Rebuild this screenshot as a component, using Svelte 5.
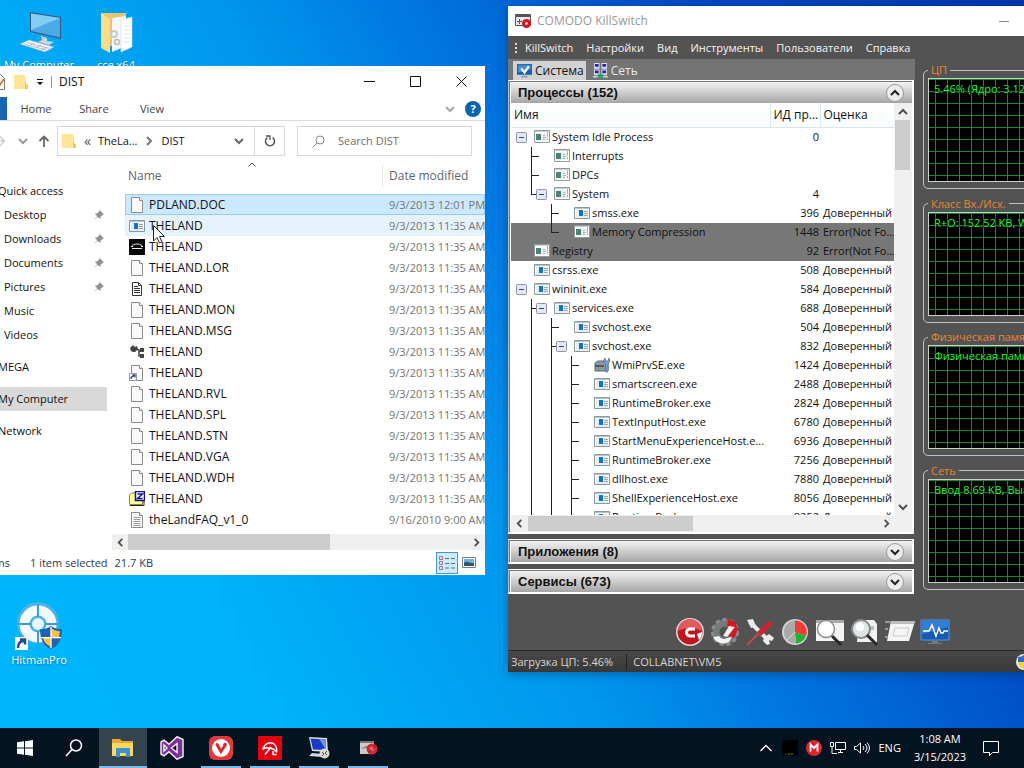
<script>
  const quickItems = ['Desktop', 'Downloads', 'Documents', 'Pictures'];
  const t = '9/3/2013 11:35 AM';
  const files = [
    ['PDLAND.DOC', 'doc', '9/3/2013 12:01 PM'],
    ['THELAND', 'app', t],
    ['THELAND', 'dos', t],
    ['THELAND.LOR', 'doc', t],
    ['THELAND', 'note', t],
    ['THELAND.MON', 'doc', t],
    ['THELAND.MSG', 'doc', t],
    ['THELAND', 'reg', t],
    ['THELAND', 'link', t],
    ['THELAND.RVL', 'doc', t],
    ['THELAND.SPL', 'doc', t],
    ['THELAND.STN', 'doc', t],
    ['THELAND.VGA', 'doc', t],
    ['THELAND.WDH', 'doc', t],
    ['THELAND', 'zip', t],
    ['theLandFAQ_v1_0', 'text', '9/16/2010 9:00 AM']
  ];

  const ok = 'Доверенный';
  const err = 'Error(Not Fo...';
  // guides: levels with a continuing line; last: the branch ends at this row
  const processes = [
    { name: 'System Idle Process', level: 0, pid: 0, rate: '', icon: 'sys', open: true, guides: [] },
    { name: 'Interrupts', level: 1, pid: '', rate: '', icon: 'sys', guides: [1] },
    { name: 'DPCs', level: 1, pid: '', rate: '', icon: 'sys', guides: [1] },
    { name: 'System', level: 1, pid: 4, rate: '', icon: 'sys', open: true, guides: [], last: true },
    { name: 'smss.exe', level: 2, pid: 396, rate: ok, icon: 'app', guides: [2] },
    { name: 'Memory Compression', level: 2, pid: 1448, rate: err, icon: 'sys', guides: [], last: true, dim: true },
    { name: 'Registry', level: 0, pid: 92, rate: err, icon: 'sys', guides: [], dim: true },
    { name: 'csrss.exe', level: 0, pid: 508, rate: ok, icon: 'app', guides: [] },
    { name: 'wininit.exe', level: 0, pid: 584, rate: ok, icon: 'app', open: true, guides: [] },
    { name: 'services.exe', level: 1, pid: 688, rate: ok, icon: 'app', open: true, guides: [1] },
    { name: 'svchost.exe', level: 2, pid: 504, rate: ok, icon: 'app', guides: [1, 2] },
    { name: 'svchost.exe', level: 2, pid: 832, rate: ok, icon: 'app', open: true, guides: [1, 2] },
    ...[
      ['WmiPrvSE.exe', 1424, 'wmi'],
      ['smartscreen.exe', 2488],
      ['RuntimeBroker.exe', 2824],
      ['TextInputHost.exe', 6780],
      ['StartMenuExperienceHost.e...', 6936],
      ['RuntimeBroker.exe', 7256],
      ['dllhost.exe', 7880],
      ['ShellExperienceHost.exe', 8056],
      ['RuntimeBroker.exe', 8252]
    ].map(([name, pid, icon]) => ({ name, pid, level: 3, rate: ok, icon: icon ?? 'app', guides: [1, 2, 3] }))
  ];

  const menu = ['KillSwitch', 'Настройки', 'Вид', 'Инструменты', 'Пользователи', 'Справка'];
  const charts = [
    ['ЦП', '5.46% (Ядро: 3.12%)'],
    ['Класс Вх./Исх.', 'R+O: 152.52 KB, W: 0'],
    ['Физическая память', 'Физическая память: 1.9 GB'],
    ['Сеть', 'Ввод 8.69 KB, Вывод 0']
  ];
  const tools = ['comodo', 'gear', 'tools', 'pie', 'find', 'inspect', 'run', 'monitor'];
  const tasks = [
    ['start', 'Start'], ['search', 'Search'], ['explorer', 'File Explorer', 'active'], ['vs', 'Visual Studio'],
    ['vivaldi', 'Vivaldi', 'running'], ['avira', 'Avira', 'running'], ['remote', 'Remote Desktop', 'running'], ['kill', 'KillSwitch', 'running']
  ];
  let search = $state('');
</script>

{#snippet fileIcon(kind)}
  <svg class="i16" viewBox="0 0 16 16" aria-hidden="true">
    {#if kind === 'doc' || kind === 'text' || kind === 'link'}
      <path d="M2.5.5h8l3 3v12h-11z" fill="#fafafa" stroke="#8b8b8b" />
      <path d="M10.500.5v3h3" fill="#fff" stroke="#8b8b8b" />
      {#if kind === 'text'}<path d="M4.500 5.500h7M4.500 7.500h7M4.500 9.500h7M4.500 11.500h7M4.500 13.500h7" stroke="#9a9a9a" />{/if}
      {#if kind === 'link'}<path d="M.5 8.500h7v7h-7z" fill="#fff" stroke="#999" /><path d="M2 14c0-2 1-3 3-3M3.500 10h2.500v2.500" fill="none" stroke="#2c4a8c" stroke-width="1.300" />{/if}
    {:else if kind === 'app'}
      <path d="M.5 2.500h15v11H.5z" fill="#fff" stroke="#8a979f" /><path d="M1 3h14v1H1z" fill="#b9c4cb" />
      <path d="M2 5h12v8H2z" fill="#e4eef5" /><path d="M5 5h4v6H5z" fill="#1673b8" />
      <path d="M10 6.500h4M10 8.500h4M10 10.500h4" stroke="#9aa8b2" />
    {:else if kind === 'sys'}
      <path d="M.5 1.500h15v12H.5z" fill="#fff" stroke="#8f9b9f" /><path d="M1 2h14v1H1z" fill="#c9d0d2" />
      <path d="M2 4h12v8H2z" fill="#eef3f1" /><path d="M2 5h5v6H2z" fill="#4f8274" />
      <path d="M9 6.500h2M9 8.500h3M9 10.500h2M13.500 3v5M13.500 9v2" stroke="#a3b3b2" />
    {:else if kind === 'dos'}
      <path d="M0 0h16v16H0z" fill="#050505" /><path d="M3 6.500c3-2 7-2 10 0M2 7.500h2M12 7.500h2M3 9.500h10" stroke="#eee" fill="none" />
    {:else if kind === 'note'}
      <path d="M3.500 1.500h6l3 3v10h-9z" fill="#fff" stroke="#333" /><path d="M5 5.500h4M5 7.500h6M5 9.500h6M5 11.500h6M9.500 1.500v3h3" stroke="#333" fill="none" />
    {:else if kind === 'reg'}
      <path d="M1 4l3-3 2 2 2-1 1 3-3 3-2 0-2-1z" fill="#444" /><path d="M7 5l3 1v6h3M10 7h3" stroke="#444" stroke-width="1.500" fill="none" />
      <path d="M11 4h4v4h-4zM11 10h4v4h-4z" fill="#444" />
    {:else if kind === 'zip'}
      <path d="M.5 13.500V4l2-2H8v2h5.500v9.500z" fill="#ffff9c" stroke="#8b8b20" /><path d="M1 14.500h14V6" stroke="#222" fill="none" />
      <path d="M6.500.5h9v9h-9z" fill="#fff" stroke="#12128f" stroke-width="1.500" /><path d="M8.500 3h5l-5 4.500h5" stroke="#12128f" stroke-width="1.500" fill="none" />
    {:else if kind === 'wmi'}
      <path d="M1 6l3-2h7l3 2v8H1z" fill="#8c979e" stroke="#5c686f" /><path d="M1 9h9" stroke="#40484d" stroke-width="1.500" />
      <path d="M11 1l1 3 2 0 1-3 1 3-2 3v7c0 1.500-2.500 1.500-2.500 0V7L9.500 4z" fill="#7ba0d4" stroke="#4b679b" stroke-width=".7" />
    {/if}
  </svg>
{/snippet}

{#snippet folder()}
  <svg class="i16" viewBox="0 0 16 16" aria-hidden="true"><path d="M12 1l1 9 2 1v4H2z" fill="#efc95f" /><path d="M1 1h11v14H1z" fill="#ffe594" /></svg>
{/snippet}

{#snippet chev(dir)}
  <svg class="chev {dir}" viewBox="0 0 10 10" aria-hidden="true"><path d="M1 3l4 4 4-4" fill="none" stroke="currentColor" stroke-width="2" /></svg>
{/snippet}

{#snippet shield()}
  <path d="M0 3C4 3 7 2 10 0c3 2 6 3 10 3 0 9-3 15-10 18C3 18 0 12 0 3z" fill="#2062b0" />
  <path d="M10 2c3 2 5 2.500 8 2.800-.1 2-.3 3.700-.8 5.200H10zM10 10v9C6 17 3.500 14.500 2.600 10z" fill="#ffc23d" /><path d="M10 1v19M1 10.500h18" stroke="#fff" stroke-width="1.200" />
{/snippet}

<main class="desktop">
  <button class="shortcut computer">
    <svg viewBox="0 0 48 48" aria-hidden="true">
      <path d="M28 3l31 5v22l-31-7z" transform="translate(-1 0)" fill="#385c80" /><path d="M28 4.500l29 4.600v19.400L28 22z" fill="#4caae8" /><path d="M28 4.500l29 4.600L28 21z" fill="#82cdf4" />
      <path d="M38 27l6 2v3l7 1-5 3-11-3 4-2z" fill="#c9d6e0" /><path d="M17 35l9-4 25 7-9 5z" fill="#f2f5f8" stroke="#9eacb8" stroke-width=".6" />
      <path d="M21 35l22 6M24 33.500l22 6M26 37l5-3M32 39l6-3M38 41l6-3" stroke="#b2bfca" />
    </svg>
    <span>My Computer</span>
  </button>
  <button class="shortcut archive">
    <svg viewBox="0 0 48 48" aria-hidden="true">
      <path d="M9 4h25v33H9z" fill="#e8c56c" /><path d="M20 9l14-2v30l-14 6z" fill="#f7f7f5" /><path d="M29 11l11-3v30l-11 5z" fill="#fff" stroke="#d8dde0" stroke-width=".6" />
      <path d="M9 4l9 6v34l-9-5z" fill="#fbdc88" /><circle cx="22" cy="25" r="3" fill="none" stroke="#c3ccd2" stroke-width="2" /><circle cx="25" cy="33" r="2.500" fill="none" stroke="#b3bec6" stroke-width="1.500" />
      <path d="M32 17h6M32 21h5M32 25h6M32 29h5M32 33h5" stroke="#dde1e4" />
    </svg>
    <span>cce x64</span>
  </button>
  <button class="shortcut hitman">
    <svg viewBox="0 0 48 48" aria-hidden="true">
      <circle cx="23" cy="21" r="21" fill="#5db4e6" opacity=".8" /><circle cx="23" cy="22" r="13.500" fill="none" stroke="#f2fafe" stroke-width="10" />
      <circle cx="23" cy="22" r="6" fill="#e8f6fd" /><path d="M23 2v13M23 29v13M3 22h13M30 22h13" stroke="#3c9bd0" stroke-width="2" />
      <path d="M0 35h13v13H0z" fill="#fff" /><path d="M3 46c0-5 2-7 6-7M5 37.500h5v5" stroke="#234b91" stroke-width="2.500" fill="none" />
      <g transform="translate(25 24) scale(1.1)">{@render shield()}</g>
    </svg>
    <span>HitmanPro</span>
  </button>

  <section class="explorer" aria-label="DIST">
    <header class="ex-title">
      <svg class="i16" viewBox="0 0 16 16" aria-hidden="true"><path d="M1.500.5h9l4 4v11h-13z" fill="#fff" stroke="#777" /><path d="M5 8l4 4 5-7" stroke="#c7773a" stroke-width="2" fill="none" /></svg>
      {@render folder()}
      <svg class="qa" viewBox="0 0 8 8" aria-hidden="true"><path d="M1 1.500h6" stroke="#111" /><path d="M1 4h6L4 7z" fill="#111" /></svg>
      <i class="bar"></i>
      <span>DIST</span>
      <div class="winbtns">
        <button aria-label="Minimize"><svg viewBox="0 0 11 11"><path d="M0 5.500h11" stroke="#111" /></svg></button>
        <button aria-label="Maximize"><svg viewBox="0 0 11 11"><path d="M.5.5h10v10H.5z" stroke="#111" fill="none" /></svg></button>
        <button aria-label="Close"><svg viewBox="0 0 11 11"><path d="M.5.5l10 10M10.500.5l-10 10" stroke="#111" /></svg></button>
      </div>
    </header>
    <nav class="ribbon">
      <i class="filetab"></i>
      <button>Home</button><button>Share</button><button>View</button>
      <span class="grow"></span>
      <span class="soft">{@render chev('down')}</span>
      <button class="help" aria-label="Help">?</button>
    </nav>
    <div class="address">
      <button class="fwd" aria-label="Forward"><svg viewBox="0 0 12 12"><path d="M0 6h10.500M6 1.500L10.500 6 6 10.500" fill="none" stroke="#ccc" stroke-width="1.500" /></svg></button>
      <span class="hist">{@render chev('down')}</span>
      <button class="up" aria-label="Up"><svg viewBox="0 0 12 12"><path d="M6 12V1.500M1.500 6L6 1.500 10.500 6" fill="none" stroke="#666" stroke-width="1.800" /></svg></button>
      <div class="path">
        {@render folder()}
        <span class="lt">«</span>
        <button>TheLa...</button>
        <span class="gt">{@render chev('right')}</span>
        <button>DIST</button>
        <span class="grow"></span>
        <button class="drop" aria-label="Previous locations">{@render chev('down')}</button>
        <button class="refresh" aria-label="Refresh"><svg viewBox="0 0 12 12"><path d="M3.500 2.500A4.500 4.500 0 1 0 8.500 2.500" fill="none" stroke="#555" stroke-width="1.500" /><path d="M2 1h4v4" fill="none" stroke="#555" stroke-width="1.300" /></svg></button>
      </div>
      <label class="search">
        <svg viewBox="0 0 13 13" aria-hidden="true"><circle cx="8" cy="5" r="4" fill="none" stroke="#888" /><path d="M5 8L.5 12.500" stroke="#888" /></svg>
        <input bind:value={search} placeholder="Search DIST" aria-label="Search DIST" />
      </label>
    </div>
    <div class="ex-body">
      <nav class="side">
        <a href="#quick">Quick access</a>
        {#each quickItems as q}
          <a class="sub" href="#{q}">{q}
            <svg viewBox="0 0 10 10" aria-hidden="true"><path d="M5.500 0L10 4.500 8.500 5 6.500 7 6.300 9.300 3.700 6.700 0 10 3.200 6.200.7 3.700 3 3.500 5 1.500z" fill="#8d9499" /></svg>
          </a>
        {/each}
        <a class="sub" href="#music">Music</a>
        <a class="sub" href="#videos">Videos</a>
        <a class="root" href="#mega">MEGA</a>
        <a class="root on" href="#computer">My Computer</a>
        <a class="root" href="#network">Network</a>
      </nav>
      <div class="files">
        <table>
          <colgroup><col class="c-name" /><col /></colgroup>
          <thead><tr><th>Name<span class="sort"><svg viewBox="0 0 8 5" aria-hidden="true"><path d="M.5 4.500L4 1l3.500 3.500" fill="none" stroke="#555" /></svg></span></th><th class="date">Date modified</th></tr></thead>
          <tbody>
            {#each files as [name, kind, date], i}
              <tr class:selected={i === 0} class:hover={i === 1}>
                <td><div class="fname">{@render fileIcon(kind)}<span>{name}</span></div></td>
                <td class="date">{date}</td>
              </tr>
            {/each}
          </tbody>
        </table>
        <div class="hscroll ex-hs"><button aria-label="Scroll left">{@render chev('left')}</button><i class="thumb ex-thumb"></i><span class="grow"></span><button aria-label="Scroll right">{@render chev('right')}</button></div>
      </div>
    </div>
    <footer class="ex-status">
      <span>16 items</span><span>1 item selected</span><span class="size">21.7 KB</span>
      <span class="grow"></span>
      <button class="view on" aria-label="Details view"><svg viewBox="0 0 16 14"><g fill="none" stroke="#a4709c"><path d="M.5.5h3v3h-3zM.5 5.500h3v3h-3zM.5 10.500h3v3h-3z" /></g><path d="M6 2.500h4M12 2.500h4M6 7.500h4M12 7.500h4M6 12h4M12 12h4" stroke="#54758c" /></svg></button>
      <button class="view" aria-label="Thumbnail view"><svg viewBox="0 0 16 14"><path d="M1.500 1.500h13v10h-13z" fill="#fff" stroke="#6e7f8c" /><path d="M3 3h10v7H3z" fill="#75b0d8" /><path d="M3 7c3-3 6 1 10 0v3H3z" fill="#355568" /></svg></button>
    </footer>
  </section>

  <section class="kill" aria-label="COMODO KillSwitch">
    <header class="k-title">
      <svg viewBox="0 0 16 16" aria-hidden="true"><path d="M.5 1.500h15v11H.5z" fill="#e6e6e6" stroke="#555" /><path d="M1 2h14v2H1z" fill="#555" /><path d="M2 8.500h5M4.500 6v5" stroke="#555" fill="none" /><circle cx="11.500" cy="10.500" r="4.500" fill="#d3151c" /><circle cx="11.500" cy="10.500" r="1.300" fill="#fff" /></svg>
      <span>COMODO KillSwitch</span>
      <button aria-label="Minimize"><svg viewBox="0 0 10 10"><path d="M0 5.500h10" stroke="#888" /></svg></button>
      <button aria-label="Maximize"><svg viewBox="0 0 10 10"><path d="M.5.5h9v9h-9z" stroke="#888" fill="none" /></svg></button>
      <button aria-label="Close"><svg viewBox="0 0 10 10"><path d="M0 0l10 10M10 0L0 10" stroke="#888" /></svg></button>
    </header>
    <nav class="k-menu">
      <i class="grip"></i>
      {#each menu as m}<button>{m}</button>{/each}
    </nav>
    <div class="k-main">
      <div class="k-left">
        <div class="tabs">
          <button class="on"><svg viewBox="0 0 14 14" aria-hidden="true"><path d="M0 1h14v10H0z" fill="#1d5da9" /><path d="M1 2h12v4L1 9z" fill="#4591d6" /><path d="M4 5l3 4 4-6" stroke="#fff" stroke-width="2" fill="none" /><path d="M4 12h6v1.500H4z" fill="#8b9aa8" /></svg>Система</button>
          <button><svg viewBox="0 0 16 16" aria-hidden="true"><g fill="#dde"><path d="M1 0h6v6H1zM9 0h6v6H9zM1 7h6v6H1zM9 7h6v6H9z" /></g><g fill="#2225a8"><path d="M2 1h4v3H2zM10 1h4v3h-4zM2 8h4v3H2zM10 8h4v3h-4z" /></g><path d="M0 14h16v1.500H0z" fill="#ddd" /><path d="M5 12h6v4H5z" fill="#2ba36b" /></svg>Сеть</button>
        </div>
        <div class="panel">
          <h2>Процессы (152)<button class="round" aria-label="Collapse">{@render chev('up')}</button></h2>
          <div class="grid">
            <div class="clip">
              <table>
                <colgroup><col /><col class="c-pid" /><col class="c-rate" /></colgroup>
                <thead><tr><th>Имя</th><th>ИД пр...</th><th>Оценка</th></tr></thead>
                <tbody>
                  {#each processes as p}
                    <tr class:dim={p.dim}>
                      <td>
                        <div class="node">
                          <svg class="tree" width={20 * p.level + 23} height="19" aria-hidden="true">
                            {#each p.guides as g}<path d="M{20 * g + 0.5} 0v19" />{/each}
                            {#if p.last}<path d="M{20 * p.level + 0.5} 0v9" />{/if}
                            {#if p.level}<path d="M{20 * p.level} 9.500h{p.open ? 6 : 8}" />{/if}
                            {#if p.open}
                              <g transform="translate({20 * p.level + 5} 4)"><rect x=".5" y=".5" width="10" height="10" rx="1" class="box" /><path d="M3 5.500h5" class="minus" /></g>
                            {/if}
                          </svg>
                          {@render fileIcon(p.icon)}<span>{p.name}</span>
                        </div>
                      </td>
                      <td class="pid">{p.pid}</td>
                      <td class="rate">{p.rate}</td>
                    </tr>
                  {/each}
                </tbody>
              </table>
            </div>
            <div class="vscroll"><button aria-label="Scroll up">{@render chev('up')}</button><i class="thumb"></i><span class="grow"></span><button aria-label="Scroll down">{@render chev('down')}</button></div>
          </div>
          <div class="hscroll k-hs"><button aria-label="Scroll left">{@render chev('left')}</button><i class="thumb k-thumb"></i><span class="grow"></span><button aria-label="Scroll right">{@render chev('right')}</button></div>
        </div>
        <div class="panel"><h2>Приложения (8)<button class="round" aria-label="Expand">{@render chev('down')}</button></h2></div>
        <div class="panel"><h2>Сервисы (673)<button class="round" aria-label="Expand">{@render chev('down')}</button></h2></div>
      </div>
      <div class="charts">
        {#each charts as [title, value]}
          <fieldset><legend>{title}</legend><div class="chart"><span>{value}</span></div></fieldset>
        {/each}
      </div>
    </div>
    <div class="toolbar">
      {#each tools as k}
        <button aria-label={k}>
          <svg viewBox="0 0 30 30">
            {#if k === 'comodo'}
              <circle cx="15" cy="15" r="14" fill="#ddd" /><circle cx="15" cy="15" r="12.500" fill="#bf1720" /><path d="M3 14a12 12 0 0 1 24 0c-8-4-16-4-24 0z" fill="#e05a5e" />
              <path d="M20 12h-5a3.500 3.500 0 0 0 0 7h5" stroke="#fff" stroke-width="3" fill="none" /><path d="M22 17l5-2c0 4-1 6-3 8z" fill="#fff" />
            {:else if k === 'gear'}
              <circle cx="15" cy="15" r="9" fill="none" stroke="#77797a" stroke-width="7" /><circle cx="15" cy="15" r="12.500" fill="none" stroke="#8b8d8e" stroke-width="3" stroke-dasharray="4 3" />
              <path d="M18 3c9-1 12 10 6 18l-5-2c3-5 2-9-2-10z" fill="#d9161d" /><path d="M19 9l6 1-8 10-4-1z" fill="#efefef" /><path d="M3 20c3 6 10 8 16 5l3-5-5 1c-3 2-6 1-8-2z" fill="#f4f4f4" />
            {:else if k === 'tools'}
              <path d="M5 5l18 18" stroke="#e9edef" stroke-width="4" /><path d="M2 3l6-1 3 7-5 2zM19 21l5-4 5 4-2 3-3-1 1 4-3 1-4-4z" fill="#e9edef" />
              <path d="M2 28L15 15" stroke="#c34a50" stroke-width="2" /><path d="M12 15L24 4l4 3-12 12z" fill="#d1232d" />
            {:else if k === 'pie'}
              <circle cx="15" cy="15" r="13" fill="#d2d2d2" /><path d="M15 15V3.500A11.500 11.500 0 0 1 26 19z" fill="#f13c31" /><path d="M15 15l11 4a12 12 0 0 1-10 7.500z" fill="#25b135" /><path d="M15 15l1 11.500A11.500 11.500 0 0 1 15 3.500z" fill="#a9a9a9" /><path d="M15 15l-8 8" stroke="#ddd" />
            {:else if k === 'find'}
              <path d="M1 3h28v21H1z" fill="#f4f4f4" /><path d="M1 3h28v3H1z" fill="#aaa" /><circle cx="11" cy="12" r="8.500" fill="#fff" stroke="#8c8f90" stroke-width="1.500" /><path d="M17 19l9 9" stroke="#292929" stroke-width="3" />
            {:else if k === 'inspect'}
              <path d="M9 3h15l3 4v18H7z" fill="#f1f1f1" /><path d="M17 9h7v4h-7z" fill="#bbb" /><circle cx="11" cy="12" r="9" fill="#dfe4e5" stroke="#85898b" stroke-width="2" /><circle cx="10" cy="10" r="4" fill="#fff" /><path d="M17 18l10 10" stroke="#292929" stroke-width="3" />
            {:else if k === 'run'}
              <path d="M6 4h24l-6 20H2z" fill="#f4f4f4" /><path d="M6 4h24l-1 3H5z" fill="#bcbcbc" /><path d="M10 11h14l-2 8H8z" fill="none" stroke="#ccc" /><path d="M0 5h5M0 12h3M0 20h3" stroke="#999" stroke-width="2" />
            {:else}
              <path d="M1 3h28v20H1z" fill="#165ab6" stroke="#5797da" /><path d="M2 4h26v6L2 17z" fill="#327ed2" /><path d="M3 14h6l3-6 4 11 3-8 2 5h2l1-2h4" stroke="#fff" stroke-width="1.500" fill="none" /><path d="M12 24h6v2h4v1H8v-1h4z" fill="#707b84" />
            {/if}
          </svg>
        </button>
      {/each}
    </div>
    <footer class="k-status">
      <span>Загрузка ЦП: 5.46%</span><span class="host">COLLABNET\VM5</span><span class="grow"></span>
      <svg viewBox="0 0 16 16" aria-hidden="true"><circle cx="8" cy="8" r="8" fill="#e9edf2" /><path d="M2 3c3 0 4-1 6-2 2 1 3 2 6 2v5H2z" fill="#2e6bc0" /><path d="M2 8h12c0 3-2 6-6 7-4-1-6-4-6-7z" fill="#f1d33c" /></svg>
    </footer>
  </section>

  <svg class="pointer" viewBox="0 0 12 19" aria-hidden="true"><path d="M.5.5v15.500l3.500-3.500 2.500 5.500 2.500-1-2.500-5.500h5z" fill="#fff" stroke="#222" /></svg>

  <footer class="taskbar">
    {#each tasks as [k, label, state]}
      <button class="task {state ?? ''}" aria-label={label}>
        <svg viewBox="0 0 24 24">
          {#if k === 'start'}
            <path d="M4 6.300l7-1V11.500H4zM12 5.200L20 4v7.500h-8zM4 12.500h7v6.200l-7-1zM12 12.500h8V20l-8-1.200z" fill="#fff" />
          {:else if k === 'search'}
            <circle cx="14" cy="9.500" r="5.500" fill="none" stroke="#fff" stroke-width="1.500" /><path d="M10 13.500L4 20" stroke="#fff" stroke-width="1.500" />
          {:else if k === 'explorer'}
            <path d="M1 3h8l2 2h11v15H1z" fill="#e8a92e" /><path d="M1 7h21v13H1z" fill="#ffd768" /><path d="M5 12h14v9h-4v-4H9v4H5z" fill="#3c91cd" />
          {:else if k === 'vs'}
            <path d="M17 .8l6 2.700v17l-6 2.700-8-7.400-5 4-3-1.800V6l3-1.800 5 4zM17 7.500L11.500 12l5.500 4.500zM4 9v6l3-3z" fill="#773296" fill-rule="evenodd" stroke="#f3e8f7" stroke-width="1.500" />
          {:else if k === 'vivaldi'}
            <rect width="24" height="24" rx="6" fill="#e5383b" /><circle cx="12" cy="12" r="9" fill="#fff" /><path d="M8 8.500l4 7 4-6" stroke="#dc292d" stroke-width="3" stroke-linecap="round" fill="none" /><circle cx="16" cy="8.500" r="1.800" fill="#dc292d" />
          {:else if k === 'avira'}
            <path d="M0 0h24v24H0z" fill="#e3000f" /><path d="M5 13C6.500 7.500 12 5 16 8c2.500 2 3 5 2.500 8-2-3-4-4-6.500-3.500-2-1-4.500-1-7 .5z" fill="none" stroke="#fff" stroke-width="1.500" stroke-linejoin="round" /><path d="M13 11l-6 7.500M15 15v3.500h3.500" stroke="#fff" stroke-width="1.500" fill="none" />
          {:else if k === 'remote'}
            <path d="M2 1l18 1 1 14-16-1z" fill="#d9dfe8" /><path d="M3.500 2.500l15 1 .5 10.500-13-.5z" fill="#1939c6" /><path d="M12 3l6.500.5.5 10.500z" fill="#6f92ea" /><path d="M5 17l10 1v3L2 20z" fill="#d5dae0" /><circle cx="17.500" cy="17.500" r="5" fill="#d8dad2" /><path d="M15 16l2 2-2 2M20 15l-2 2 2 2" stroke="#555" fill="none" />
          {:else}
            <path d="M4 5h14v13H4z" fill="#ccc" /><path d="M4 5h14v2H4z" fill="#777" /><path d="M6 12h3l1-2 2 4" stroke="#777" fill="none" /><circle cx="16" cy="13" r="5.500" fill="#d32735" /><circle cx="16" cy="13" r="2" fill="#eb858d" /><path d="M12 17l9-8" stroke="#9c1420" />
          {/if}
        </svg>
      </button>
    {/each}
    <span class="grow"></span>
    <div class="tray">
      <svg viewBox="0 0 16 16" aria-hidden="true"><path d="M2.500 11L8 5.500l5.500 5.500" stroke="#fff" stroke-width="1.300" fill="none" /></svg>
      <svg viewBox="0 0 16 16" aria-hidden="true"><path d="M0 0h16v16H0z" fill="#000" /><path d="M4 15v-1M7 15v-2M10 15v-2" stroke="#8a8a1e" /></svg>
      <svg viewBox="0 0 16 16" aria-hidden="true"><circle cx="8" cy="8" r="8" fill="#d9272e" /><path d="M4.500 11.500v-7L8 8l3.500-3.500v7" stroke="#fff" stroke-width="1.800" fill="none" /></svg>
      <svg viewBox="0 0 16 16" aria-hidden="true"><path d="M5.500 2.500h10v7h-10zM8 12.500h5M10.500 9.500v3M.5 2.500h3v4h-3zM2 6.500v7h5" stroke="#fff" fill="none" /></svg>
      <svg viewBox="0 0 16 16" aria-hidden="true"><path d="M.5 6.500h2l4-3.500v10l-4-3.500h-2zM9 6q2 2 0 4M11 4q4 4 0 8M13 2.500q5 5.500 0 11" stroke="#fff" fill="none" /></svg>
      <span>ENG</span>
      <time>1:08 AM<br />3/15/2023</time>
      <button class="notify" aria-label="Notifications"><svg viewBox="0 0 16 16"><path d="M.5 1.500h15v11h-6l-3 3v-3h-6z" stroke="#fff" fill="none" /></svg></button>
    </div>
  </footer>
</main>

<style>
  :global(body) { margin: 0; }
  * { box-sizing: border-box; }
  button { border: 0; padding: 0; margin: 0; background: none; font: inherit; color: inherit; white-space: nowrap; }
  button svg { display: block; }
  a { color: inherit; text-decoration: none; }
  table { border-collapse: collapse; table-layout: fixed; width: 100%; }
  th, td { padding: 0; text-align: left; font-weight: 400; white-space: nowrap; overflow: hidden; }
  .grow { flex: 1; }
  .i16 { width: 16px; height: 16px; flex: none; display: block; }
  .chev { width: 10px; height: 10px; display: block; }
  .chev.up { transform: rotate(180deg); }
  .chev.left { transform: rotate(90deg); }
  .chev.right { transform: rotate(-90deg); }

  .desktop {
    position: relative; min-height: 100vh; overflow: hidden;
    font: 11px/16px "Open Sans", "Noto Sans", sans-serif; color: #111;
    background: linear-gradient(62deg, #00b6fb 0%, #00b2f8 22%, #0096ee 44%, #0078e2 56%, #0048c4 78%, #0036ac 100%);
    display: flex; flex-direction: column; justify-content: flex-end;
  }
  .shortcut { position: absolute; width: 76px; display: flex; flex-direction: column; align-items: center; color: #fff; text-shadow: 0 1px 2px #0368; }
  .shortcut svg { width: 48px; height: 48px; overflow: visible; }
  .computer { left: 1px; top: 9px; }
  .computer svg { margin-right: 24px; }
  .archive { left: 78px; top: 9px; }
  .hitman { left: 1px; top: 602px; gap: 2px; }

  .explorer { position: absolute; left: -40px; top: 66px; width: 525px; background: #fff; display: flex; flex-direction: column; }
  .ex-title { display: flex; align-items: center; height: 31px; padding-left: 30px; gap: 7px; font-size: 12px; }
  .ex-title .qa { width: 8px; height: 8px; }
  .bar { width: 1px; height: 12px; background: #999; }
  .winbtns { display: flex; margin-left: auto; margin-right: 1px; }
  .winbtns button { width: 46px; height: 30px; display: grid; place-items: center; }
  .winbtns svg { width: 11px; height: 11px; }
  .ribbon { display: flex; align-items: center; height: 24px; border-bottom: 1px solid #dadbdc; padding-right: 4px; color: #444; }
  .filetab { width: 47px; height: 23px; background: #1665b5; }
  .ribbon button { padding: 0 12px; min-width: 58px; }
  .soft { color: #aaa; margin-right: 10px; }
  .ribbon .help { min-width: 16px; width: 16px; height: 16px; padding: 0; border-radius: 50%; background: #0a64ad; color: #fff; font-weight: 700; }
  .address { display: flex; align-items: center; height: 40px; padding: 0 13px 0 34px; gap: 10px; }
  .fwd { margin-right: 2px; }
  .fwd svg { width: 12px; height: 12px; }
  .hist { color: #999; }
  .hist .chev { width: 10px; }
  .address .up svg { width: 12px; height: 12px; }
  .path { display: flex; align-items: center; width: 228px; height: 30px; border: 1px solid #d9d9d9; padding-left: 3px; gap: 7px; margin-left: -3px; }
  .lt { font-size: 14px; color: #555; }
  .path .gt { color: #777; }
  .path .drop { width: 30px; display: grid; place-items: center; color: #666; }
  .path .refresh { width: 30px; height: 28px; border-left: 1px solid #d9d9d9; display: grid; place-items: center; margin-left: -7px; }
  .refresh svg { width: 12px; height: 12px; }
  .search { flex: 1; display: flex; align-items: center; height: 30px; border: 1px solid #d9d9d9; padding-left: 14px; gap: 13px; margin-left: 2px; }
  .search svg { width: 13px; height: 13px; flex: none; }
  .search input { border: 0; outline: 0; background: none; width: 100%; font: inherit; padding: 0; }
  .search input::placeholder { color: #6d6d6d; opacity: 1; }
  .ex-body { display: flex; }
  .side { width: 147px; padding-top: 18px; display: flex; flex-direction: column; }
  .side a { display: flex; align-items: center; justify-content: space-between; height: 24px; padding: 0 3px 0 38px; }
  .side .sub { padding-left: 44px; }
  .side .sub svg { width: 10px; height: 10px; }
  .side .root { margin-top: 8px; }
  .side .on { background: #d9d9d9; }
  .files { flex: 1; min-width: 0; padding-left: 5px; font-size: 12px; }
  .files table { margin-left: 13px; width: calc(100% - 13px); }
  .c-name { width: 257px; }
  .files th { height: 33px; padding: 0 0 4px 3px; color: #5c6670; position: relative; overflow: visible; }
  .files th .sort { position: absolute; left: 123px; top: 1px; line-height: 1px; }
  .sort svg { width: 8px; height: 5px; display: block; }
  .files th.date, .files td.date { padding-left: 7px; }
  .files th.date { background: linear-gradient(#e2e2e2, #e2e2e2) 0 4px / 1px 22px no-repeat; }
  .files td { height: 21px; }
  .files td.date { color: #747474; font-size: 11px; }
  .fname { display: flex; align-items: center; gap: 4px; padding-left: 4px; }
  .selected { background: #cce8ff; box-shadow: inset 0 0 0 1px #99cdf0; }
  .hover { background: #e5f3ff; }
  .hscroll { display: flex; align-items: center; height: 16px; background: #f0f0f0; color: #505050; }
  .ex-hs { margin-top: 4px; padding-right: 1px; }
  .hscroll button { width: 16px; height: 16px; display: grid; place-items: center; }
  .thumb { background: #cdcdcd; }
  .ex-thumb { width: 202px; height: 16px; }
  .hscroll .chev { width: 9px; height: 9px; }
  .ex-status { display: flex; align-items: center; height: 25px; padding-right: 5px; color: #2b3a52; }
  .ex-status span:first-child { width: 50px; text-align: right; margin-right: 20px; }
  .ex-status .size { margin-left: 7px; }
  .view { width: 22px; height: 22px; display: grid; place-items: center; }
  .view svg { width: 16px; height: 14px; }
  .view.on { background: #cdebfb; border: 1px solid #4296c9; }

  .kill { position: absolute; left: 508px; top: 6px; width: 608px; background: #535353; display: flex; flex-direction: column; box-shadow: 0 2px 10px #0246; }
  .k-title { display: flex; align-items: center; height: 30px; background: #fff; padding-left: 7px; color: #999; font-size: 12px; }
  .k-title > svg { width: 16px; height: 16px; margin-right: 6px; }
  .k-title span { flex: 1; }
  .k-title button { width: 45px; display: grid; place-items: center; }
  .k-title button svg { width: 10px; height: 10px; }
  .k-menu { display: flex; align-items: center; height: 23px; padding-left: 7px; color: #f5f5f5; gap: 13px; }
  .grip { width: 2px; height: 10px; margin-right: -5px; background: repeating-linear-gradient(#ddd 0 2px, transparent 2px 4px); }
  .k-main { display: flex; }
  .k-left { width: 407px; flex: none; }
  .tabs { display: flex; height: 21px; background: #747474; padding: 2px 0 0 5px; color: #e8e8e8; font-size: 12px; }
  .tabs button { display: flex; align-items: center; gap: 3px; padding: 0 2px 0 4px; height: 19px; }
  .tabs .on { background: #d2d2d2; color: #111; margin-right: 3px; }
  .tabs svg { width: 15px; height: 15px; }
  .panel { margin: 0 1px 5px 0; border: 2px solid #fff; border-top: 1px solid #fff; border-left: 1px solid #bbb; background: #fff; box-shadow: inset 0 1px 0 #777, inset 1px 0 0 #777; padding: 1px 0 0 2px; }
  .panel:last-child { margin-bottom: 0; }
  h2 { display: flex; align-items: center; justify-content: space-between; margin: 0; height: 21px; padding: 0 8px 0 7px; font: 700 13px/16px "Liberation Sans", Arial, sans-serif; background: linear-gradient(#f2f2f2, #d5d5d5 40%, #a5a5a5); }
  .round { width: 18px; height: 18px; border: 1px solid #999; border-radius: 50%; background: #ececec; display: grid; place-items: center; color: #222; }
  .grid { display: flex; height: 412px; background: #fff; }
  .clip { flex: 1; min-width: 0; overflow: hidden; }
  .c-pid { width: 50px; }
  .c-rate { width: 74px; }
  .clip th { height: 24px; padding-left: 3px; font-size: 12px; border-bottom: 1px solid #d6e6ea; background: linear-gradient(#fff, #f8fcfd); }
  .clip th + th { border-left: 1px solid #d9ebee; }
  .clip td { height: 19px; }
  .node { display: flex; align-items: center; height: 19px; gap: 2px; }
  .tree { flex: none; margin-right: -2px; }
  .tree path { stroke: #222; fill: none; }
  .tree .box { fill: #e5e8f4; stroke: #8d93ad; }
  .tree path.minus { stroke: #36427c; }
  td.pid { text-align: right; padding-right: 1px; }
  td.rate { padding-left: 3px; }
  .dim { background: #777; }
  .vscroll { width: 18px; background: #f0f0f0; display: flex; flex-direction: column; color: #505050; }
  .vscroll button { height: 17px; display: grid; place-items: center; }
  .vscroll .thumb { height: 50px; margin: 0 2px 0 1px; }
  .k-hs { height: 17px; padding-right: 18px; }
  .k-thumb { width: 165px; height: 15px; margin-left: 1px; }
  .charts { flex: 1; padding: 3px 10px 4px 8px; display: flex; flex-direction: column; justify-content: space-between; }
  fieldset { margin: 0; min-width: 0; border: 1px solid #b9c2cb; border-radius: 5px; padding: 0 4px 8px; height: 127px; }
  legend { color: #e8862e; padding: 0 3px; line-height: 16px; }
  .chart {
    height: 104px; border: 1px solid #c8d3c8; color: #2df538; padding: 2px 5px; overflow: hidden; white-space: nowrap;
    text-shadow: 0 0 2px #000, 0 0 2px #000, 0 0 2px #000;
    background: linear-gradient(90deg, #188a2b 1px, transparent 1px) 6px 0 / 12px 12px, linear-gradient(#188a2b 1px, #000 1px) 0 0 / 12px 12px;
  }
  .toolbar { display: flex; justify-content: center; align-items: center; gap: 5px; height: 56px; padding-top: 20px; }
  .toolbar svg { width: 30px; height: 30px; }
  .k-status { display: flex; align-items: center; height: 22px; border-top: 1px solid #2c2c2c; background: linear-gradient(#484848, #383838); color: #d5d5d5; padding: 0 84px 0 3px; }
  .k-status .host { border-left: 1px solid #222; margin-left: 13px; padding-left: 6px; }
  .k-status svg { width: 16px; height: 16px; }

  .pointer { position: absolute; left: 153px; top: 225px; width: 12px; height: 19px; }

  .taskbar { position: relative; display: flex; align-items: center; height: 40px; background: #03131f; color: #fff; gap: 1px; padding-left: 1px; }
  .task { width: 48px; height: 40px; display: grid; place-items: center; }
  .task svg { width: 24px; height: 24px; }
  .active { background: #33454f; box-shadow: inset 0 -2px #80b7e9; }
  .running { background: linear-gradient(#80b7e9, #80b7e9) 50% 100% / 40px 2px no-repeat; }
  .tray { display: flex; align-items: center; gap: 8px; padding-right: 12px; }
  .tray > svg { width: 16px; height: 16px; }
  .tray time { text-align: center; line-height: 18px; padding-left: 5px; }
  .notify { width: 42px; display: grid; place-items: center; margin-left: -4px; }
  .notify svg { width: 16px; height: 16px; }
</style>
